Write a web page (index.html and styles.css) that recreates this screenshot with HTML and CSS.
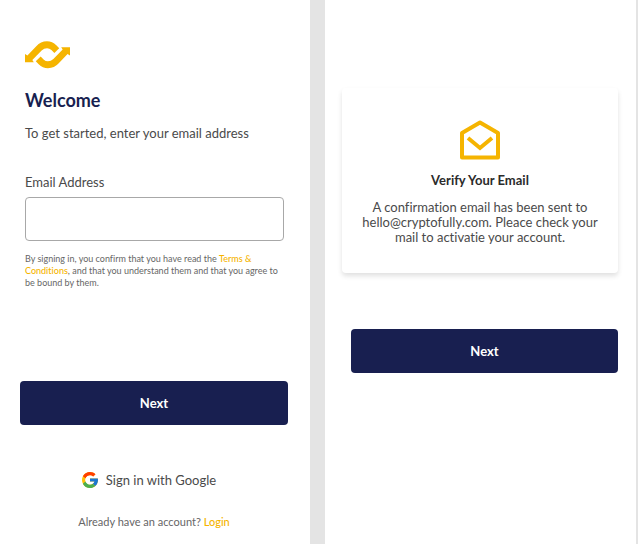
FILE: index.html
```html
<!DOCTYPE html>
<html lang="en">
<head>
<meta charset="utf-8">
<meta name="viewport" content="width=device-width, initial-scale=1">
<title>Welcome</title>
<link rel="stylesheet" href="styles.css">
</head>
<body>
<div class="screens">
  <main class="screen welcome">
    <svg class="logo" viewBox="0 0 46 28" role="img" aria-label="Cryptofully">
      <g fill="#f5b400">
        <path d="M0 13L2.500 14.500L11.500 5Q16 0 22.500 0Q28 0 32 4L35 7L30 12L27 9Q25 7 22.500 7Q19.500 7 17 9.500L7.500 19L9 21.500H0Z"/>
        <path d="M46 14.500L43.500 13L34.500 22.500Q30 27.500 23.500 27.500Q18 27.500 14 23.500L11 20.500L16 15.500L19 18.500Q21 20.500 23.500 20.500Q26.500 20.500 29 18L38.500 8.500L37 6H46Z"/>
      </g>
    </svg>
    <h1 class="title">Welcome</h1>
    <p class="lead">To get started, enter your email address</p>
    <form class="form">
      <label class="label" for="email">Email Address</label>
      <input class="field" id="email" type="email">
      <p class="terms">By signing in, you confirm that you have read the <a class="link" href="#terms">Terms &amp; Conditions</a>, and that you understand them and that you agree to be bound by them.</p>
      <button class="button" type="submit">Next</button>
    </form>
    <button class="google" type="button">
      <svg class="google-icon" viewBox="4 4 40 40" aria-hidden="true">
        <path fill="#ffc107" d="M43.611 20.083H42V20H24v8h11.303C33.654 32.657 29.223 36 24 36c-6.627 0-12-5.373-12-12s5.373-12 12-12c3.059 0 5.842 1.154 7.961 3.039l5.657-5.657C34.046 6.053 29.268 4 24 4 12.955 4 4 12.955 4 24s8.955 20 20 20 20-8.955 20-20c0-1.341-.138-2.650-.389-3.917z"/>
        <path fill="#ff3d00" d="M6.306 14.691l6.571 4.819C14.655 15.108 18.961 12 24 12c3.059 0 5.842 1.154 7.961 3.039l5.657-5.657C34.046 6.053 29.268 4 24 4 16.318 4 9.656 8.337 6.306 14.691z"/>
        <path fill="#4caf50" d="M24 44c5.166 0 9.860-1.977 13.409-5.192l-6.190-5.238C29.211 35.091 26.715 36 24 36c-5.202 0-9.619-3.317-11.283-7.946l-6.522 5.025C9.505 39.556 16.227 44 24 44z"/>
        <path fill="#1976d2" d="M43.611 20.083H42V20H24v8h11.303c-.792 2.237-2.231 4.166-4.087 5.571l6.193 5.238C36.971 39.205 44 34 44 24c0-1.341-.138-2.650-.389-3.917z"/>
      </svg>
      Sign in with Google
    </button>
    <p class="login">Already have an account? <a class="link" href="#login">Login</a></p>
  </main>
  <section class="screen verify">
    <div class="card">
      <svg class="mail" viewBox="0 0 40 40" fill="none" stroke="#f5b400" stroke-width="4" aria-hidden="true">
        <path stroke-linejoin="round" d="M2 13L20 2.500L38 13V37.500H2Z"/>
        <path d="M8 18L20 28L32 18"/>
      </svg>
      <h2 class="card-title">Verify Your Email</h2>
      <p class="card-text">A confirmation email has been sent to hello@cryptofully.com. Pleace check your mail to activatie your account.</p>
    </div>
    <button class="button" type="button">Next</button>
  </section>
</div>
</body>
</html>
```
FILE: styles.css
```css
* {
  box-sizing: border-box;
}

body {
  margin: 0;
  background: #e4e4e4;
  color: #4a4a4a;
  font-family: Lato, "Liberation Sans", sans-serif;
  font-size: 13px;
  font-variant-ligatures: none;
  line-height: 16px;
}

h1, h2, p {
  margin: 0;
}

button {
  font: inherit;
  cursor: pointer;
}

.screens {
  display: grid;
  grid-template-columns: 310fr 311fr;
  gap: 15px;
  min-height: 100vh;
  padding-right: 2px;
}

.screen {
  display: flex;
  flex-direction: column;
  background: #fff;
}

.welcome {
  padding: 41px 22px 12px 20px;
}

.logo {
  width: 45px;
  height: 28px;
  margin-left: 5px;
}

.title {
  margin: 20px 5px 0;
  color: #181f50;
  font-size: 18px;
  font-weight: 700;
  line-height: 22px;
}

.lead {
  margin: 14px 5px 0;
}

.form {
  display: flex;
  flex-direction: column;
  margin-top: 33px;
}

.label {
  margin: 0 5px;
}

.field {
  height: 44px;
  margin: 7px 4px 0 5px;
  padding: 0 12px;
  border: 1px solid #a8a8a8;
  border-radius: 4px;
  background: #fff;
  font: inherit;
}

.terms {
  margin: 12px 4px 0 5px;
  color: #666;
  font-size: 9px;
  line-height: 12px;
}

.link {
  color: #f5b400;
  font-weight: 500;
  text-decoration: none;
}

.button {
  height: 44px;
  border: 0;
  border-radius: 4px;
  background: #181f50;
  color: #fff;
  font-weight: 700;
}

.form .button {
  margin-top: 92px;
}

.google {
  display: flex;
  align-items: center;
  align-self: center;
  gap: 8px;
  margin: 47px 10px 0 0;
  padding: 0;
  border: 0;
  background: none;
  color: inherit;
}

.google-icon {
  width: 16px;
  height: 16px;
}

.login {
  margin-top: 26px;
  color: #666;
  font-size: 11px;
  text-align: center;
}

.verify {
  padding: 88px 18px 0 17px;
}

.card {
  display: flex;
  flex-direction: column;
  align-items: center;
  padding: 32px 16px 28px;
  border-radius: 4px;
  box-shadow: 0 3px 5px rgba(0, 0, 0, 0.12);
  text-align: center;
}

.mail {
  width: 40px;
  height: 40px;
}

.card-title {
  margin-top: 12px;
  color: #2b2b2b;
  font-size: 13px;
  font-weight: 700;
  line-height: 16px;
}

.card-text {
  margin-top: 12px;
  line-height: 15px;
}

.verify .button {
  margin: 56px 0 0 9px;
}
```
